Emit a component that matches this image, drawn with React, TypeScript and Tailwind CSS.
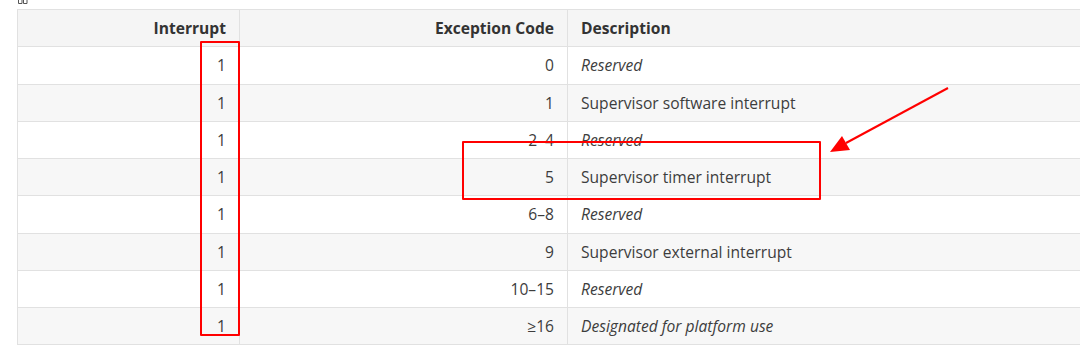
import React from "react";

type Row = { intr: string; code: string; desc: string; italic?: boolean };

const rows: Row[] = [
  { intr: "1", code: "0", desc: "Reserved", italic: true },
  { intr: "1", code: "1", desc: "Supervisor software interrupt" },
  { intr: "1", code: "2–4", desc: "Reserved", italic: true },
  { intr: "1", code: "5", desc: "Supervisor timer interrupt" },
  { intr: "1", code: "6–8", desc: "Reserved", italic: true },
  { intr: "1", code: "9", desc: "Supervisor external interrupt" },
  { intr: "1", code: "10–15", desc: "Reserved", italic: true },
  { intr: "1", code: "≥16", desc: "Designated for platform use", italic: true },
];

export default function App() {
  return (
    <div
      className="relative w-[1080px] h-[348px] overflow-hidden bg-white text-[#3d3d3d]"
      style={{ fontFamily: '"Open Sans", "Noto Sans", sans-serif' }}
    >
      {/* anchor glyph above the table */}
      <div className="h-[9px] pl-[18px]">
        <svg width="10" height="4" viewBox="0 0 10 4" className="block">
          <path d="M0.5 0V3.5H4V0M5.5 0V3.5H9V0" fill="none" stroke="#555" strokeWidth="1" />
        </svg>
      </div>

      <div className="pl-[17px]">
        <table className="border-collapse table-fixed w-[1200px] text-[15.6px] leading-[24px]">
          <colgroup>
            <col className="w-[222px]" />
            <col className="w-[328px]" />
            <col />
          </colgroup>
          <thead>
            <tr className="bg-[#f5f5f5]">
              <th className="border border-[#e1e1e1] h-[37.25px] px-[13px] py-0 text-right font-bold text-[#333]">
                Interrupt
              </th>
              <th className="border border-[#e1e1e1] h-[37.25px] px-[13px] py-0 text-right font-bold text-[#333]">
                Exception Code
              </th>
              <th className="border border-[#e1e1e1] h-[37.25px] px-[13px] py-0 text-left font-bold text-[#333]">
                Description
              </th>
            </tr>
          </thead>
          <tbody>
            {rows.map((r, i) => (
              <tr key={i} className={i % 2 === 0 ? "bg-white" : "bg-[#f7f7f7]"}>
                <td className="border border-[#e1e1e1] h-[37.25px] px-[13px] py-0 text-right">{r.intr}</td>
                <td className="border border-[#e1e1e1] h-[37.25px] px-[13px] py-0 text-right">{r.code}</td>
                <td className={"border border-[#e1e1e1] h-[37.25px] px-[13px] py-0 text-left " + (r.italic ? "italic" : "")}>
                  {r.desc}
                </td>
              </tr>
            ))}
          </tbody>
        </table>
      </div>

      {/* red annotations */}
      <div className="absolute left-[200px] top-[41px] w-[40px] h-[295px] border-2 border-[#f00] rounded-[1px]" />
      <div className="absolute left-[462px] top-[141px] w-[359px] h-[59px] border-2 border-[#f00] rounded-[1px]" />
      <svg className="absolute left-0 top-0" width="1080" height="348" viewBox="0 0 1080 348">
        <line x1="948" y1="88" x2="846" y2="143" stroke="#f00" strokeWidth="2" />
        <polygon points="830,152 842,136 850,150" fill="#f00" />
      </svg>
    </div>
  );
}
